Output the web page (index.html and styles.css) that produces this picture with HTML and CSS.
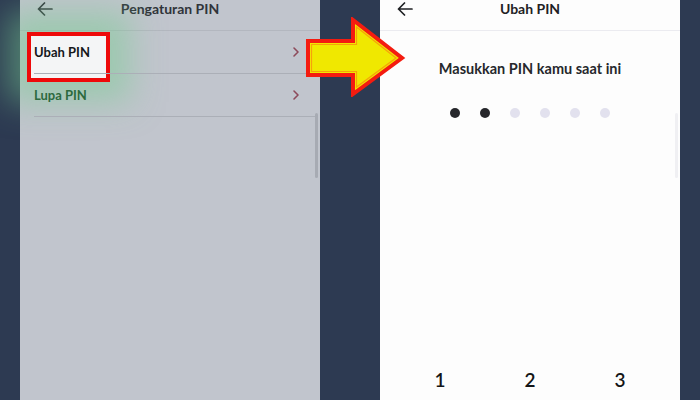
FILE: index.html
```html
<!DOCTYPE html>
<html lang="id">
<head>
    <meta charset="UTF-8">
    <meta name="viewport" content="width=device-width, initial-scale=1.0">
    <title>Ubah PIN</title>
    <link rel="stylesheet" href="styles.css">
</head>
<body>
    <div class="stage">
        <div class="phone phone-dim">
            <div class="topbar topbar-dim">
                <svg class="back" width="16" height="14" viewBox="0 0 16 14"><path d="M15 7H1.5M7.5 1L1.5 7l6 6" fill="none" stroke="currentColor" stroke-width="1.7" stroke-linecap="round" stroke-linejoin="round"/></svg>
                <span class="topbar-title">Pengaturan PIN</span>
            </div>
            <div class="highlight"></div>
            <ul class="menu">
                <li class="menu-item">
                    <span>Ubah PIN</span>
                    <svg class="chev" width="8" height="12" viewBox="0 0 8 12"><path d="M2 2l4 4-4 4" fill="none" stroke="currentColor" stroke-width="1.6" stroke-linecap="round" stroke-linejoin="round"/></svg>
                </li>
                <li class="menu-item menu-green">
                    <span>Lupa PIN</span>
                    <svg class="chev" width="8" height="12" viewBox="0 0 8 12"><path d="M2 2l4 4-4 4" fill="none" stroke="currentColor" stroke-width="1.6" stroke-linecap="round" stroke-linejoin="round"/></svg>
                </li>
            </ul>
            <div class="scrollbar scrollbar-dim"></div>
        </div>

        <div class="phone">
            <div class="topbar">
                <svg class="back" width="16" height="14" viewBox="0 0 16 14"><path d="M15 7H1.5M7.5 1L1.5 7l6 6" fill="none" stroke="currentColor" stroke-width="1.7" stroke-linecap="round" stroke-linejoin="round"/></svg>
                <span class="topbar-title">Ubah PIN</span>
            </div>
            <p class="prompt">Masukkan PIN kamu saat ini</p>
            <div class="dots">
                <span class="dot filled"></span>
                <span class="dot filled"></span>
                <span class="dot"></span>
                <span class="dot"></span>
                <span class="dot"></span>
                <span class="dot"></span>
            </div>
            <div class="keypad">
                <span>1</span>
                <span>2</span>
                <span>3</span>
            </div>
            <div class="scrollbar"></div>
        </div>

        <svg class="pointer" width="104" height="80" viewBox="0 0 104 80">
            <path d="M4 24H49V3L98 41L49 77V58H4Z" fill="#f0e800" stroke="#f41c10" stroke-width="4" stroke-linejoin="miter"/>
            <path d="M7.5 27.5H52.5V10L92 41L52.5 70V54.5H7.5Z" fill="none" stroke="#f7a20a" stroke-width="1.2"/>
        </svg>
    </div>
</body>
</html>
```

FILE: styles.css
```css
* {
    box-sizing: border-box;
}
body {
    margin: 0;
    background-color: #2d3a52;
    font-family: 'Lato', 'Noto Sans', sans-serif;
}
.stage {
    position: relative;
    display: flex;
    gap: 60px;
    padding-left: 20px;
    height: 400px;
    overflow: hidden;
}
.phone {
    position: relative;
    width: 300px;
    height: 400px;
    background: #fdfdfd;
    display: flex;
    flex-direction: column;
}
.phone-dim {
    background: #c1c5cd;
}
.topbar {
    position: relative;
    height: 31px;
    border-bottom: 1px solid #ebebf0;
    display: flex;
    justify-content: center;
    color: #1f2124;
}
.topbar-dim {
    border-bottom-color: #b3b7bf;
    color: #30343a;
}
.back {
    position: absolute;
    left: 17px;
    top: 2px;
}
.topbar-title {
    font-size: 14px;
    font-weight: 700;
    line-height: 18px;
}
.highlight {
    position: absolute;
    left: 7px;
    top: 32px;
    width: 83px;
    height: 50px;
    border: 4px solid #ee0a0a;
    background: #f4f5f6;
    box-shadow: 0 0 32px 20px rgba(120, 205, 145, 0.5);
}
.menu {
    position: relative;
    list-style: none;
    margin: 0;
    padding: 0 4px 0 14px;
}
.menu-item {
    height: 43px;
    border-bottom: 1px solid #abafb7;
    display: flex;
    align-items: center;
    justify-content: space-between;
    padding-right: 16px;
    font-size: 13px;
    font-weight: 700;
    color: #16181b;
}
.menu-green {
    color: #2c6a3e;
}
.chev {
    color: #8d4a5a;
}
.scrollbar {
    position: absolute;
    right: 2px;
    top: 113px;
    width: 3px;
    height: 65px;
    border-radius: 2px;
    background: #f0f0f3;
}
.scrollbar-dim {
    background: #a7abb3;
}
.pointer {
    position: absolute;
    left: 304px;
    top: 17px;
}
.prompt {
    margin: 29px 0 0;
    text-align: center;
    font-size: 14.5px;
    font-weight: 700;
    line-height: 18px;
    color: #26282c;
}
.dots {
    display: flex;
    justify-content: center;
    gap: 20px;
    margin-top: 30px;
}
.dot {
    width: 10px;
    height: 10px;
    border-radius: 50%;
    background: #e2e1ee;
}
.dot.filled {
    background: #26272b;
}
.keypad {
    margin-top: auto;
    display: grid;
    grid-template-columns: repeat(3, 90px);
    padding: 0 15px;
}
.keypad span {
    height: 40px;
    line-height: 40px;
    text-align: center;
    font-size: 19px;
    font-weight: 600;
    color: #141517;
}
```
